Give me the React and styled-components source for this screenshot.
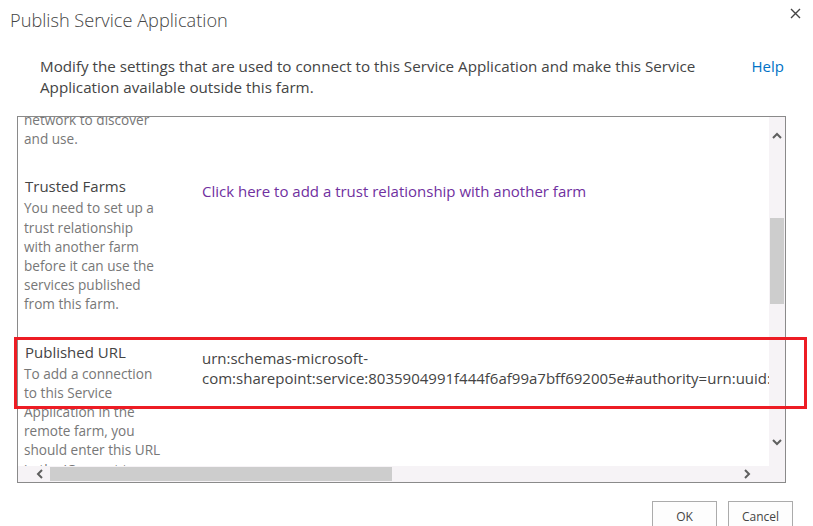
import React from 'react';
import styled, { createGlobalStyle } from 'styled-components';

const GlobalStyle = createGlobalStyle`
  html, body {
    margin: 0;
    padding: 0;
    background: #ffffff;
    overflow: hidden;
  }
  body {
    font-family: "Segoe UI", "Open Sans", "Liberation Sans", sans-serif;
    color: #444444;
  }
`;

const Dialog = styled.div`
  position: relative;
  width: 813px;
  height: 526px;
  display: flex;
  flex-direction: column;
`;

const Header = styled.div`
  display: flex;
  justify-content: space-between;
  align-items: flex-start;
  padding: 7px 12px 0 10px;
`;

const Title = styled.h1`
  margin: 0;
  font-size: 18.2px;
  line-height: 26px;
  font-weight: 300;
  color: #444444;
`;

const CloseButton = styled.button`
  border: 0;
  background: none;
  padding: 0;
  margin-top: 1px;
  color: #444444;
  display: flex;
`;

const Intro = styled.div`
  display: flex;
  justify-content: space-between;
  align-items: flex-start;
  padding: 23px 29px 0 40px;
`;

const IntroText = styled.p`
  margin: 0;
  max-width: 690px;
  font-size: 15.2px;
  line-height: 21px;
  color: #444444;
`;

const HelpLink = styled.a`
  font-size: 15px;
  line-height: 21px;
  color: #0072c6;
  text-decoration: none;
`;

const Frame = styled.div`
  margin: 18px 27px 0 17px;
  height: 367px;
  box-sizing: border-box;
  border: 1px solid #8a8a8a;
  display: grid;
  grid-template-columns: 1fr 16px;
  grid-template-rows: 1fr 16px;
`;

const Viewport = styled.div`
  overflow: hidden;
`;

const Content = styled.div`
  margin-top: -7px;
  padding-left: 6px;
  width: 1100px;
`;

const Section = styled.div`
  display: grid;
  grid-template-columns: 178px 1fr;
  padding-bottom: 28px;
`;

const SectionHead = styled.div`
  width: 160px;
`;

const SectionTitle = styled.div`
  font-size: 15px;
  line-height: 20px;
  color: #444444;
  padding-left: 1px;
`;

const SectionDesc = styled.div`
  margin-top: ${p => (p.$flush ? 0 : 2)}px;
  font-size: 13.6px;
  line-height: 19.2px;
  color: #777777;
`;

const SectionBody = styled.div`
  padding-top: ${p => p.$top || 5}px;
  font-size: 15px;
  line-height: 20px;
  color: #444444;
  width: 620px;
`;

const TrustLink = styled.a`
  color: #7030a0;
  text-decoration: none;
`;

const VTrack = styled.div`
  background: #f6f3f6;
  display: flex;
  flex-direction: column;
  align-items: center;
  justify-content: space-between;
  padding: 15px 0 20px;
  position: relative;
`;

const VThumb = styled.div`
  position: absolute;
  left: 1px;
  right: 1px;
  top: 101px;
  height: 86px;
  background: #cdcdcd;
`;

const HTrack = styled.div`
  background: #f6f3f6;
  display: flex;
  align-items: center;
  padding: 0 18px 0 18px;
  gap: 6px;
`;

const HThumb = styled.div`
  width: 342px;
  height: 14px;
  background: #cdcdcd;
`;

const HSpacer = styled.div`
  flex: 1;
`;

const Corner = styled.div`
  background: #f6f3f6;
`;

const Footer = styled.div`
  display: flex;
  justify-content: flex-end;
  gap: 11px;
  padding: 18px 20px 0 0;
`;

const Button = styled.button`
  width: 65px;
  height: 30px;
  box-sizing: border-box;
  background: #fdfdfd;
  border: 1px solid #ababab;
  font-family: inherit;
  font-size: 12px;
  color: #444444;
  padding: 0;
`;

const Highlight = styled.div`
  position: absolute;
  left: 14px;
  top: 337px;
  width: 793px;
  height: 72px;
  box-sizing: border-box;
  border: 3px solid #ed1c24;
  pointer-events: none;
`;

const Chevron = ({ dir }) => {
  const pts = {
    up: '1,6 5,2 9,6',
    down: '1,2 5,6 9,2',
    left: '6,1 2,5 6,9',
    right: '2,1 6,5 2,9',
  }[dir];
  const vertical = dir === 'up' || dir === 'down';
  return (
    <svg width={vertical ? 10 : 8} height={vertical ? 8 : 10} viewBox={vertical ? '0 0 10 8' : '0 0 8 10'}>
      <polyline points={pts} fill="none" stroke="#5f5f5f" strokeWidth="2" />
    </svg>
  );
};

const CloseIcon = () => (
  <svg width="11" height="11" viewBox="0 0 11 11">
    <path d="M1 1 L10 10 M10 1 L1 10" stroke="#444" strokeWidth="1.4" />
  </svg>
);

// description lines break where the settings page breaks them
const lines = (...parts) =>
  parts.map((t, i) => (
    <React.Fragment key={i}>
      {i > 0 && <br />}
      {t}
    </React.Fragment>
  ));

export default function App() {
  return (
    <>
      <GlobalStyle />
      <Dialog>
        <Header>
          <Title>Publish Service Application</Title>
          <CloseButton aria-label="Close"><CloseIcon /></CloseButton>
        </Header>

        <Intro>
          <IntroText>
            Modify the settings that are used to connect to this Service Application and make this Service
            Application available outside this farm.
          </IntroText>
          <HelpLink href="#">Help</HelpLink>
        </Intro>

        <Frame>
          <Viewport>
            <Content>
              <Section>
                <SectionHead>
                  <SectionDesc $flush>{lines('network to discover', 'and use.')}</SectionDesc>
                </SectionHead>
                <div />
              </Section>

              <Section>
                <SectionHead>
                  <SectionTitle>Trusted Farms</SectionTitle>
                  <SectionDesc>
                    {lines(
                      'You need to set up a',
                      'trust relationship',
                      'with another farm',
                      'before it can use the',
                      'services published',
                      'from this farm.'
                    )}
                  </SectionDesc>
                </SectionHead>
                <SectionBody>
                  <TrustLink href="#">Click here to add a trust relationship with another farm</TrustLink>
                </SectionBody>
              </Section>

              <Section>
                <SectionHead>
                  <SectionTitle>Published URL</SectionTitle>
                  <SectionDesc>
                    {lines(
                      'To add a connection',
                      'to this Service',
                      'Application in the',
                      'remote farm, you',
                      'should enter this URL',
                      "in the 'Connect to a",
                      "remote service",
                      "application' dialog."
                    )}
                  </SectionDesc>
                </SectionHead>
                <SectionBody $top={6}>
                  urn:schemas-microsoft-com:sharepoint:service:8035904991f444f6af99a7bff692005e#authority=urn:uuid:0c37852b34d0418e91c62ac25af4be5b&amp;authority=https://sp2013:32844/Topology/topology.svc
                </SectionBody>
              </Section>
            </Content>
          </Viewport>

          <VTrack>
            <Chevron dir="up" />
            <VThumb />
            <Chevron dir="down" />
          </VTrack>

          <HTrack>
            <Chevron dir="left" />
            <HThumb />
            <HSpacer />
            <Chevron dir="right" />
          </HTrack>
          <Corner />
        </Frame>

        <Footer>
          <Button>OK</Button>
          <Button>Cancel</Button>
        </Footer>

        <Highlight />
      </Dialog>
    </>
  );
}
